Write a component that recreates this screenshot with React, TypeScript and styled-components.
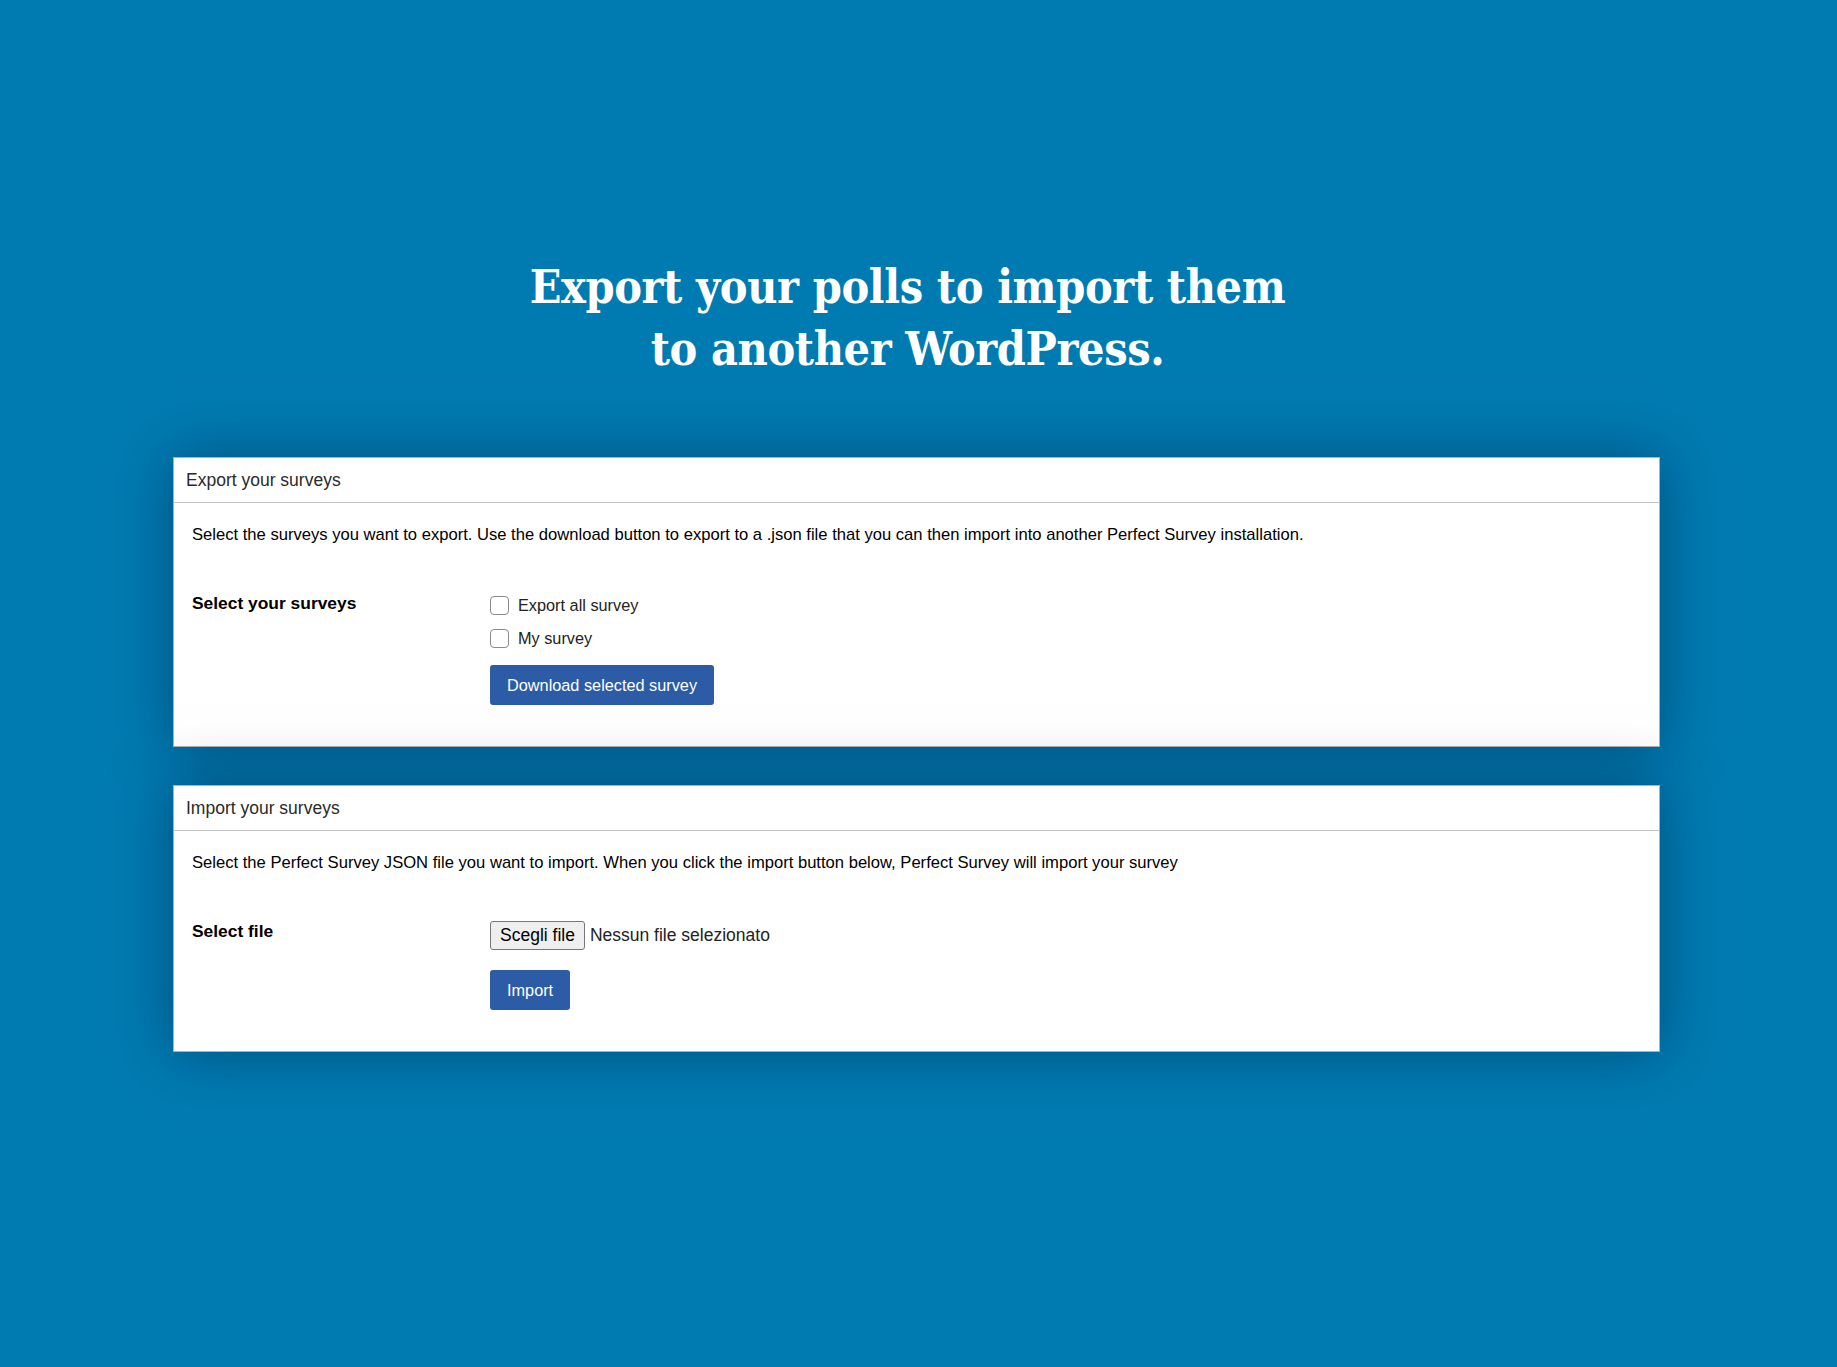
import React from "react";
import styled, { createGlobalStyle } from "styled-components";

const GlobalStyle = createGlobalStyle`
  html, body {
    margin: 0;
    padding: 0;
    background: #007bb2;
  }
  body {
    font-family: "Liberation Sans", Arial, sans-serif;
  }
`;

const Page = styled.main`
  min-height: 1367px;
  box-sizing: border-box;
  padding: 256px 177px 0 173px;
  display: flex;
  flex-direction: column;
  align-items: stretch;
`;

const Heading = styled.h1`
  margin: 0 0 77px 0;
  padding-right: 18px;
  text-align: center;
  color: #ffffff;
  font-family: "DejaVu Serif", "Liberation Serif", serif;
  font-stretch: condensed;
  font-weight: 700;
  font-size: 46.3px;
  line-height: 62px;
  letter-spacing: -0.4px;
`;

const Cards = styled.div`
  display: flex;
  flex-direction: column;
  gap: 38px;
`;

const Card = styled.section`
  background: #ffffff;
  border: 1px solid #b0b0b0;
  box-shadow: 0 0 55px rgba(0, 35, 70, 0.5);
`;

const CardHeader = styled.header`
  height: 44px;
  display: flex;
  align-items: center;
  padding: 0 12px;
  border-bottom: 1px solid #c3c3c3;
  font-size: 17.5px;
  color: #2a2a2a;
`;

const CardBody = styled.div`
  padding: 21px 18px 41px 18px;
`;

const Description = styled.p`
  margin: 0 0 46px 0;
  font-size: 16.6px;
  line-height: 22px;
  color: #000;
  white-space: nowrap;
`;

const FieldRow = styled.div`
  display: grid;
  grid-template-columns: 298px 1fr;
  align-items: start;
`;

const FieldLabel = styled.div`
  font-weight: 700;
  font-size: 17.4px;
  line-height: 22px;
  color: #000;
`;

const Controls = styled.div<{ $gap: number }>`
  display: flex;
  flex-direction: column;
  align-items: flex-start;
  gap: ${(p) => p.$gap}px;
`;

const CheckList = styled.div`
  display: flex;
  flex-direction: column;
  gap: 11px;
  padding-top: 2px;
`;

const CheckRow = styled.label`
  display: flex;
  align-items: center;
  gap: 9px;
  font-size: 16.3px;
  line-height: 22px;
  color: #222;
`;

const CheckBox = styled.span`
  display: inline-block;
  width: 19px;
  height: 19px;
  border: 1px solid #8b8b8b;
  border-radius: 4px;
  background: #fff;
  box-sizing: border-box;
`;

const PrimaryButton = styled.button`
  height: 40px;
  padding: 0 17px;
  border: none;
  border-radius: 3px;
  background: #2b5ca5;
  color: #fff;
  font-family: "Liberation Sans", Arial, sans-serif;
  font-size: 16.3px;
  cursor: pointer;
`;

const FileRow = styled.div`
  display: flex;
  align-items: center;
  gap: 5px;
  padding-top: 1px;
  font-size: 17.5px;
  color: #222;
`;

const FileButton = styled.span`
  display: inline-flex;
  align-items: center;
  height: 29px;
  box-sizing: border-box;
  padding: 0 9px;
  background: #efefef;
  border: 1px solid #777;
  border-radius: 3px;
  font-size: 17.5px;
  color: #000;
`;

export default function App() {
  return (
    <>
      <GlobalStyle />
      <Page>
        <Heading>
          Export your polls to import them
          <br />
          to another WordPress.
        </Heading>
        <Cards>
          <Card>
            <CardHeader>Export your surveys</CardHeader>
            <CardBody>
              <Description>
                Select the surveys you want to export. Use the download button to export to a .json file that you can
                then import into another Perfect Survey installation.
              </Description>
              <FieldRow>
                <FieldLabel>Select your surveys</FieldLabel>
                <Controls $gap={16}>
                  <CheckList>
                    <CheckRow>
                      <CheckBox />
                      Export all survey
                    </CheckRow>
                    <CheckRow>
                      <CheckBox />
                      My survey
                    </CheckRow>
                  </CheckList>
                  <PrimaryButton>Download selected survey</PrimaryButton>
                </Controls>
              </FieldRow>
            </CardBody>
          </Card>
          <Card>
            <CardHeader>Import your surveys</CardHeader>
            <CardBody>
              <Description>
                Select the Perfect Survey JSON file you want to import. When you click the import button below, Perfect
                Survey will import your survey
              </Description>
              <FieldRow>
                <FieldLabel>Select file</FieldLabel>
                <Controls $gap={20}>
                  <FileRow>
                    <FileButton>Scegli file</FileButton>
                    Nessun file selezionato
                  </FileRow>
                  <PrimaryButton>Import</PrimaryButton>
                </Controls>
              </FieldRow>
            </CardBody>
          </Card>
        </Cards>
      </Page>
    </>
  );
}
